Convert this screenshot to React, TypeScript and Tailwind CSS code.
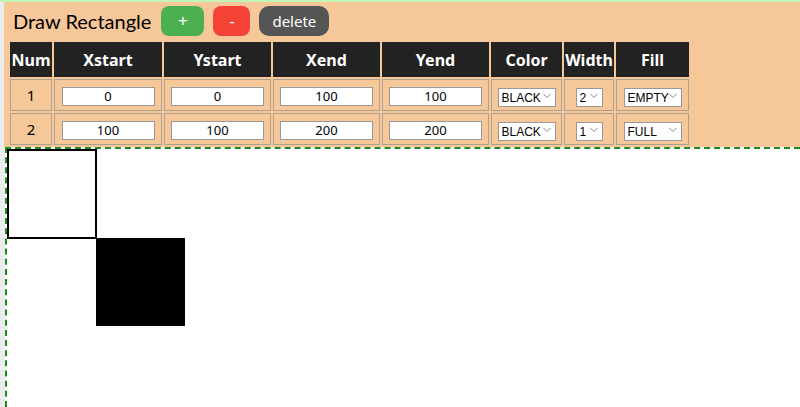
import React from "react";

type Rect = {
  xs: number;
  ys: number;
  xe: number;
  ye: number;
  color: string;
  width: string;
  fill: string;
};

const rects: Rect[] = [
  { xs: 0, ys: 0, xe: 100, ye: 100, color: "BLACK", width: "2", fill: "EMPTY" },
  { xs: 100, ys: 100, xe: 200, ye: 200, color: "BLACK", width: "1", fill: "FULL" },
];

const font = { fontFamily: '"Noto Sans", "Open Sans", sans-serif' };
const titleFont = { fontFamily: 'Lato, "Noto Sans", sans-serif' };
const selectFont = { fontFamily: '"Liberation Sans", Arial, sans-serif' };

function Chevron() {
  return (
    <svg
      className="pointer-events-none absolute right-[5px] top-1/2 -translate-y-1/2"
      width="8"
      height="5"
      viewBox="0 0 8 5"
    >
      <path d="M0.5 0.5 L4 4 L7.5 0.5" fill="none" stroke="#888" strokeWidth="1" />
    </svg>
  );
}

function Select({ value, options, w }: { value: string; options: string[]; w: string }) {
  return (
    <div className={`relative inline-block align-middle ${w}`}>
      <select
        defaultValue={value}
        style={selectFont}
        className="h-[19px] w-full appearance-none border border-[#999] bg-white pl-[3px] pr-[12px] text-[12px] leading-none text-black outline-none"
      >
        {options.map((o) => (
          <option key={o}>{o}</option>
        ))}
      </select>
      <Chevron />
    </div>
  );
}

function NumInput({ value }: { value: number }) {
  return (
    <input
      defaultValue={value}
      className="h-[19px] w-[93px] border border-[#999] bg-white text-center text-[13px] text-black outline-none"
    />
  );
}

export default function App() {
  const heads = ["Num", "Xstart", "Ystart", "Xend", "Yend", "Color", "Width", "Fill"];
  const widths = ["w-[42px]", "w-[108px]", "w-[107px]", "w-[107px]", "w-[107px]", "w-[71px]", "w-[50px]", "w-[73px]"];

  return (
    <div className="min-h-[407px] w-full border-t-2 border-[#c3f5b8] bg-[#ececec] pl-[4px]" style={font}>
      <div className="bg-[#f6c799] pl-[6px] pt-[4px]">
        <div className="flex items-center gap-[9px]">
          <span className="ml-[3px] mr-[1px] text-[20px] leading-[30px] text-black" style={titleFont}>
            Draw Rectangle
          </span>
          <button className="h-[30px] w-[43px] rounded-[8px] bg-[#4caf50] text-[17px] text-white">+</button>
          <button className="h-[30px] w-[37px] rounded-[8px] bg-[#f44336] text-[17px] text-white">-</button>
          <button className="h-[30px] w-[70px] rounded-[10px] bg-[#555555] text-[15px] text-white">delete</button>
        </div>
        <table className="mt-[4px] border-separate border-spacing-[2px] -ml-[2px]">
          <thead>
            <tr>
              {heads.map((h, i) => (
                <th
                  key={h}
                  className={`${widths[i]} h-[35px] bg-[#222222] p-0 text-center text-[16px] font-bold text-white`}
                >
                  {h}
                </th>
              ))}
            </tr>
          </thead>
          <tbody>
            {rects.map((r, i) => (
              <tr key={i}>
                <td className="h-[32px] border border-[#b0a090] p-0 text-center text-[15px] text-black">{i + 1}</td>
                <td className="border border-[#b0a090] p-0 text-center"><NumInput value={r.xs} /></td>
                <td className="border border-[#b0a090] p-0 text-center"><NumInput value={r.ys} /></td>
                <td className="border border-[#b0a090] p-0 text-center"><NumInput value={r.xe} /></td>
                <td className="border border-[#b0a090] p-0 text-center"><NumInput value={r.ye} /></td>
                <td className="border border-[#b0a090] p-0 text-center">
                  <Select value={r.color} options={["BLACK", "RED", "GREEN", "BLUE"]} w="w-[58px]" />
                </td>
                <td className="border border-[#b0a090] p-0 text-center">
                  <Select value={r.width} options={["1", "2", "3", "4"]} w="w-[27px]" />
                </td>
                <td className="border border-[#b0a090] p-0 text-center">
                  <Select value={r.fill} options={["EMPTY", "FULL"]} w="w-[58px]" />
                </td>
              </tr>
            ))}
          </tbody>
        </table>
      </div>
      {/* drawing area */}
      <div className="ml-[1px] h-[260px] border-l-2 border-t-2 border-dashed border-[#1e8a1e] bg-white">
        <svg width="794" height="258">
          <rect x="1" y="1" width="88" height="88" fill="none" stroke="#000" strokeWidth="2" />
          <rect x="89" y="89" width="89" height="88" fill="#000" />
        </svg>
      </div>
    </div>
  );
}
